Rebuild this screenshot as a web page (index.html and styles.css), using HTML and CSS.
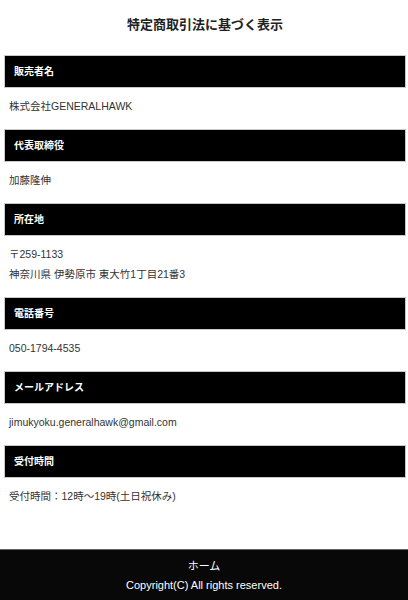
FILE: index.html
```html
<!DOCTYPE html>
<html lang="ja">
<head>
<meta charset="utf-8">
<link rel="stylesheet" href="styles.css">
</head>
<body>
<main class="page">
  <h1 class="title">特定商取引法に基づく表示</h1>
  <section class="item">
    <h2 class="item-head">販売者名</h2>
    <div class="item-body"><p>株式会社GENERALHAWK</p></div>
  </section>
  <section class="item">
    <h2 class="item-head">代表取締役</h2>
    <div class="item-body"><p>加藤隆伸</p></div>
  </section>
  <section class="item">
    <h2 class="item-head">所在地</h2>
    <div class="item-body"><p>〒259-1133</p><p>神奈川県 伊勢原市 東大竹1丁目21番3</p></div>
  </section>
  <section class="item">
    <h2 class="item-head">電話番号</h2>
    <div class="item-body"><p>050-1794-4535</p></div>
  </section>
  <section class="item">
    <h2 class="item-head">メールアドレス</h2>
    <div class="item-body"><p>jimukyoku.generalhawk@gmail.com</p></div>
  </section>
  <section class="item">
    <h2 class="item-head">受付時間</h2>
    <div class="item-body"><p>受付時間：12時〜19時(土日祝休み)</p></div>
  </section>
</main>
<footer class="footer">
  <a class="footer-link" href="#">ホーム</a>
  <p class="copy">Copyright(C) All rights reserved.</p>
</footer>
</body>
</html>
```
FILE: styles.css
```css
* { box-sizing: border-box; }
html, body { margin: 0; padding: 0; }
body {
  font-family: "Liberation Sans", "Noto Sans CJK JP", sans-serif;
  color: #333;
  background: #fff;
  width: 408px;
}
.page {
  padding: 0 2px 0 4px;
  height: 549px;
}
.title {
  margin: 0;
  padding: 16px 0 0;
  height: 55px;
  font-size: 13px;
  font-weight: bold;
  text-align: center;
  line-height: 18px;
  color: #222;
}
.item-head {
  margin: 0;
  height: 33px;
  background: #000;
  border: 1px solid #c8c8c8;
  color: #fff;
  font-size: 10px;
  font-weight: bold;
  line-height: 31px;
  padding-left: 9px;
}
.item-body {
  padding: 8px 0 13px 5px;
}
.item-body p {
  margin: 0;
  font-size: 10.5px;
  line-height: 20px;
}
.item:last-child .item-body { padding-bottom: 0; }
.footer {
  background: #080808;
  border-top: 1px solid #666;
  height: 51px;
  text-align: center;
  color: #fff;
  padding-top: 8px;
}
.footer-link {
  display: block;
  color: #fff;
  text-decoration: none;
  font-size: 11px;
  line-height: 16px;
}
.copy {
  margin: 3px 0 0;
  font-size: 11px;
  line-height: 16px;
}
```
